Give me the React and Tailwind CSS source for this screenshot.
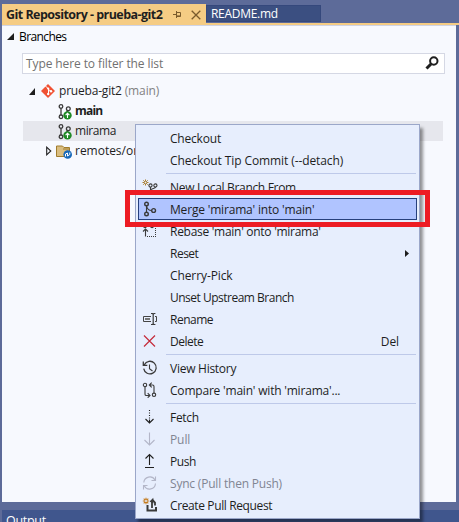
import React from "react";

function Glyph({ children, size = 16, className = "" }) {
  return (
    <svg width={size} height={size} viewBox="0 0 16 16" fill="none" stroke="#3a3a3a" strokeWidth="1.1" className={"shrink-0 " + className}>
      {children}
    </svg>
  );
}

function BranchIcon() {
  return (
    <Glyph className="mt-px">
      <circle cx="4" cy="2.5" r="1.8" strokeWidth="1.3" />
      <circle cx="11.3" cy="4.8" r="1.9" strokeWidth="1.3" />
      <circle cx="4" cy="12.8" r="1.8" strokeWidth="1.3" />
      <path d="M4 4.3v6.7M11 6.7L9 9" strokeWidth="1.3" />
      <circle cx="10.5" cy="11.4" r="4.2" fill="#1f8a26" stroke="none" />
      <path d="M10.5 14V9.4M8.6 11.2l1.9-1.9 1.9 1.9" stroke="#fff" strokeWidth="1.1" />
    </Glyph>
  );
}

const icons = {
  newBranch: (
    <Glyph>
      <path d="M3.5 .5v6M.5 3.5h6M1.3 1.3l4.4 4.4M5.7 1.3L1.3 5.7" stroke="#a87c2c" strokeWidth="1" />
      <circle cx="3.5" cy="3.5" r="1" fill="#e6edfd" stroke="none" />
      <circle cx="8.5" cy="6.5" r="1.6" />
      <circle cx="13.4" cy="6.5" r="1.6" />
      <path d="M8.5 8v7M13.4 8c0 2-4.9 1-4.9 4" />
    </Glyph>
  ),
  merge: (
    <Glyph>
      <circle cx="4.5" cy="3" r="1.8" strokeWidth="1.4" />
      <circle cx="4.5" cy="13" r="1.8" strokeWidth="1.4" />
      <circle cx="11.6" cy="9.5" r="1.9" strokeWidth="1.4" />
      <path d="M4.5 4.8v6.4M4.7 5c.4 3 2 4.5 5 4.5" />
    </Glyph>
  ),
  rebase: (
    <Glyph>
      <circle cx="3" cy="3" r="1.6" />
      <circle cx="10" cy="3" r="1.6" />
      <path d="M3.5 13.5v-7M1 8.5L3.5 6 6 8.5" />
      <path d="M13.5 5v9M5 13.5h9" strokeDasharray="1 1" strokeWidth="1" />
    </Glyph>
  ),
  rename: (
    <Glyph>
      <path d="M9 5.5H1.5v5H9M13 5.5h1.5v5H13" stroke="#444" strokeWidth="1" />
      <path d="M3 8h5" stroke="#777" strokeWidth="2" />
      <path d="M9 2.5h1.5l.7.7.7-.7h1.5M9 13.5h1.5l.7-.7.7.7h1.5M11.2 3v10" strokeWidth="1.2" />
    </Glyph>
  ),
  remove: (
    <Glyph>
      <path d="M2 2.5l11 11M13 2.5l-11 11" stroke="#c42b3b" strokeWidth="1.2" />
    </Glyph>
  ),
  history: (
    <Glyph>
      <path d="M2.3 4.7A6.3 6.3 0 1 1 1.7 8.7M1.3 1.5v3.8h4" strokeWidth="1.3" />
      <path d="M7.5 4.5v4.2l3 2.3" />
    </Glyph>
  ),
  compare: (
    <Glyph>
      <circle cx="3" cy="3" r="1.7" />
      <circle cx="12" cy="12.8" r="1.7" />
      <path d="M3 4.8v7.4q0 1.3 1.4 1.3h3M5.7 11.2L8 13.5l-2.3 2.2M12 11V4.5q0-1.5-1.4-1.5H7.5M9.7.6L7.3 3l2.4 2.3" />
    </Glyph>
  ),
  fetch: (
    <Glyph>
      <path d="M7.5 1v10" strokeDasharray="1 1.5" stroke="#202020" />
      <path d="M7.5 10.5v3.5M3.5 10l4 4 4-4" stroke="#202020" />
    </Glyph>
  ),
  pull: (
    <Glyph>
      <path d="M7.5 1.5V14M2.5 9l5 5 5-5" stroke="#b3b6c8" />
    </Glyph>
  ),
  push: (
    <Glyph>
      <path d="M7.5 12V1.5M3.5 5.5l4-4 4 4M3 14.5h9" stroke="#202020" />
    </Glyph>
  ),
  sync: (
    <Glyph>
      <path d="M1.8 7.5A6 6 0 0 1 13 5M13.5 1.5V5.5H9.5M13.5 8.5A6 6 0 0 1 2.3 11M1.5 14.5V10.5H5.5" stroke="#b3b6c8" />
    </Glyph>
  ),
  pullRequest: (
    <Glyph>
      <path d="M4 .8v6.4M.8 4h6.4M1.7 1.7l4.6 4.6M6.3 1.7L1.7 6.3" stroke="#c47a1c" strokeWidth="1.1" />
      <circle cx="4" cy="4" r="1" fill="#e7eefd" stroke="none" />
      <path d="M5.5 8v5.6H14V10" strokeWidth="2" />
      <path d="M10 11V3.5M13 8.5V5.5L10.5 3" strokeWidth="1.8" />
      <path d="M7.6 4.4L11.3 .8v5.8z" fill="#3a3a3a" stroke="none" />
    </Glyph>
  ),
};

const groups = [
  [
    { label: "Checkout", fit: "tracking-[-0.2px]" },
    { label: "Checkout Tip Commit (--detach)", fit: "tracking-[-0.1px]" },
  ],
  [
    { label: "New Local Branch From...", icon: "newBranch", fit: "tracking-[-0.32px]" },
    { label: "Merge 'mirama' into 'main'", icon: "merge", selected: true, fit: "tracking-[-0.18px]" },
    { label: "Rebase 'main' onto 'mirama'", icon: "rebase", fit: "tracking-[-0.28px]" },
    { label: "Reset", submenu: true, fit: "tracking-[-0.5px]" },
    { label: "Cherry-Pick", fit: "tracking-[-0.1px]" },
    { label: "Unset Upstream Branch", fit: "tracking-[-0.5px]" },
    { label: "Rename", icon: "rename", fit: "tracking-[-0.5px]" },
    { label: "Delete", icon: "remove", shortcut: "Del", fit: "tracking-[-0.5px]" },
  ],
  [
    { label: "View History", icon: "history", fit: "tracking-[-0.26px]" },
    { label: "Compare 'main' with 'mirama'...", icon: "compare", fit: "tracking-[-0.2px]" },
  ],
  [
    { label: "Fetch", icon: "fetch", fit: "tracking-[-0.3px]" },
    { label: "Pull", icon: "pull", disabled: true, fit: "tracking-[-0.1px]" },
    { label: "Push", icon: "push", fit: "tracking-[-0.4px]" },
    { label: "Sync (Pull then Push)", icon: "sync", disabled: true, fit: "tracking-[-0.2px]" },
    { label: "Create Pull Request", icon: "pullRequest", fit: "tracking-[-0.38px]" },
  ],
];

function MenuItem({ item }) {
  return (
    <div
      className={
        "flex h-[22px] items-center border pl-[3px] " +
        (item.selected ? "border-[#26407c] bg-[#b0c4ff] " : "border-transparent ") +
        (item.disabled ? "text-[#818592]" : "text-[#1e1e1e]")
      }
    >
      <div className="flex w-[28px] shrink-0">{item.icon && icons[item.icon]}</div>
      <span className={"flex-1 pt-[2px] " + item.fit}>{item.label}</span>
      {item.shortcut && <span className="mr-[17px] pt-[2px]">{item.shortcut}</span>}
      {item.submenu && (
        <svg width="4" height="7" viewBox="0 0 4 7" className="mr-[7px]">
          <path d="M0 0l4 3.5L0 7z" fill="#1e1e1e" />
        </svg>
      )}
    </div>
  );
}

function ContextMenu() {
  return (
    <div className="absolute left-[135px] top-[124px] h-[395px] w-[285px] border border-[#9ba7c9] bg-[#e7eefd] px-[2px] py-[2px] shadow-[3px_4px_3px_rgba(0,0,0,0.42)]">
      {groups.map((group, i) => (
        <div key={i}>
          {i > 0 && (
            <div className="h-[5px] pl-[28px] pr-px pt-[2px]">
              <div className="h-px bg-[#bec9e9]" />
            </div>
          )}
          {group.map((item) => (
            <MenuItem key={item.label} item={item} />
          ))}
        </div>
      ))}
    </div>
  );
}

function TabStrip() {
  return (
    <div className="flex h-[23px] items-end pl-[2px]">
      <div className="flex h-[19px] w-[204px] items-center bg-[#f5cc84] pl-[4px] text-[#1e1e1e]">
        <span className="w-[157px] pt-[3px] text-[12.5px] font-bold tracking-[-0.54px]">Git Repository - prueba-git2</span>
        <svg width="10" height="8" viewBox="0 0 10 8" className="ml-[10px] mt-[3px] shrink-0" fill="none" stroke="#7a5b2c">
          <path d="M0 3.5h3M3.5 0v7M3.5 1.5h4v4h-4M4 4.9h3.5" />
        </svg>
        <svg width="10" height="10" viewBox="0 0 10 10" className="ml-[8px] mt-[3px] shrink-0" fill="none" stroke="#7a5b2c" strokeWidth="1.3">
          <path d="M.7.7l8.6 8.6M9.3.7L.7 9.3" />
        </svg>
      </div>
      <div className="mb-px flex h-[17px] w-[115px] items-center border border-[#35487c] bg-[#3b4f81] pl-[4px] text-[12px] tracking-[-0.3px] text-white">
        README.md
      </div>
    </div>
  );
}

export default function App() {
  return (
    <div className="relative h-[522px] w-[459px] overflow-hidden whitespace-nowrap bg-[#5d6b99] font-['Open_Sans','Noto_Sans',sans-serif] text-[12px] leading-[16px] tracking-[-0.1px] text-[#1e1e1e]">
      <TabStrip />
      <div className="ml-[2px] h-[2px] bg-[#f5cc84]" />
      <div className="ml-[2px] h-[477px] w-[454px] border-t border-[#cfd4e6] bg-[#f7f9fe]">
        <div className="flex h-[20px] items-center pl-[5px]">
          <svg width="7" height="7" viewBox="0 0 7 7">
            <path d="M7 0v7H0z" fill="#1e1e1e" />
          </svg>
          <span className="ml-[5px] pt-px font-medium tracking-[-0.6px] text-black">Branches</span>
        </div>
        <div className="ml-[20px] mt-[7px] flex h-[21px] w-[423px] items-center justify-between border border-[#d5d8e4] bg-white pl-[3px] pr-[5px] text-[#717171]">
          <span className="pt-px tracking-[-0.1px]">Type here to filter the list</span>
          <svg width="14" height="14" viewBox="0 0 14 14" className="mb-px" fill="none" stroke="#1e1e1e">
            <circle cx="8.8" cy="5" r="3.7" strokeWidth="2" />
            <path d="M6 8L1.5 12.5" strokeWidth="3" />
          </svg>
        </div>
        <div className="mt-[7px] pl-[21px]">
          <div className="flex h-[20px] items-center pl-[6px]">
            <svg width="6" height="7" viewBox="0 0 6 7">
              <path d="M6 0v7H0z" fill="#1e1e1e" />
            </svg>
            <svg width="14" height="14" viewBox="0 0 14 14" className="ml-[6px]">
              <path d="M7 0l7 7-7 7-7-7z" fill="#f05133" />
              <path d="M4.5 2l3 3v5M7.2 5l2.6 2.4" stroke="#fff" fill="none" />
              <circle cx="7.2" cy="4.6" r="1.1" fill="#fff" />
              <circle cx="7.2" cy="10" r="1.2" fill="#fff" />
              <circle cx="10" cy="7.3" r="1.2" fill="#fff" />
            </svg>
            <span className="ml-[4px] tracking-[-0.2px]">
              prueba-git2 <span className="tracking-[-0.1px] text-[#818181]">(main)</span>
            </span>
          </div>
          <div className="flex h-[20px] items-center pl-[34px]">
            <BranchIcon />
            <span className="ml-[2px] font-bold tracking-[-0.8px]">main</span>
          </div>
          <div className="flex h-[20px] w-[420px] items-center bg-[#e6e7ed] pl-[34px]">
            <BranchIcon />
            <span className="ml-[2px] tracking-[-0.4px]">mirama</span>
          </div>
          <div className="flex h-[20px] items-center pl-[23px]">
            <svg width="6" height="10" viewBox="0 0 6 10" fill="none" stroke="#1e1e1e" strokeWidth="1.1">
              <path d="M.7 1.2v7.6L4.8 5z" />
            </svg>
            <svg width="17" height="15" viewBox="0 0 17 15" className="ml-[4px] mt-px">
              <path d="M.5 12.5V2h6l1.5 1.5h5.5v9z" fill="#d9bd80" stroke="#a17c2c" />
              <path d="M7 5h6.5" stroke="#a17c2c" />
              <circle cx="11.7" cy="10.5" r="4.3" fill="#1769ba" />
              <path d="M9.5 12.5V10l2-1v3l2.3-1.5V8.5" fill="none" stroke="#fff" />
            </svg>
            <span className="ml-[2px] tracking-[-0.02px]">remotes/origin</span>
          </div>
        </div>
      </div>
      <div className="ml-[2px] mt-[8px] h-[12px] bg-[#40568d] pl-[4px] pt-[3px] text-[12.5px] tracking-[-0.3px] text-white">Output</div>

      <ContextMenu />
      <div className="absolute left-[125px] top-[190px] h-[37px] w-[305px] border-[5px] border-[#ed1c24]" />
    </div>
  );
}
